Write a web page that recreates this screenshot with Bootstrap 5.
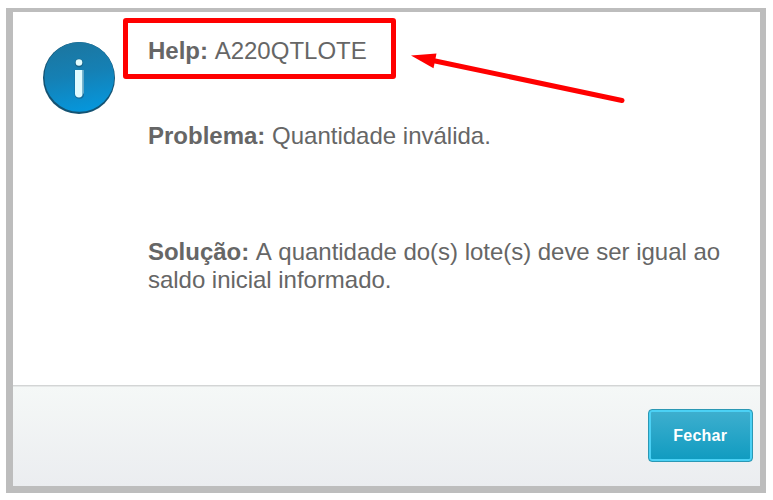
<!DOCTYPE html>
<html lang="pt-BR">
<head>
<meta charset="utf-8">
<meta name="viewport" content="width=device-width, initial-scale=1">
<title>Help: A220QTLOTE</title>
<link href="https://cdn.jsdelivr.net/npm/bootstrap@5.3.0/dist/css/bootstrap.min.css" rel="stylesheet">
<style>
  body { font-family: "Liberation Sans", Arial, sans-serif; height: 500px; padding: 8px 7px 7px 6px; }
  .dialog-frame { border: solid #bdbdbd; border-width: 4px 6px 7px 7px; border-radius: 0; }
  .dialog-body { padding: 25px 30px 0; }
  .info-icon { width: 72px; height: 72px; margin-top: 5px; }
  .help-text { color: #666; font-size: 24px; line-height: 28px; font-kerning: none; margin-left: 33px; width: 590px; }
  .help-code { margin-bottom: 57px; }
  .help-problem { margin-bottom: 88px; }
  .help-solution { letter-spacing: -.03px; }
  .dialog-footer { height: 101px; padding: 0 7.5px 2px; border-top: 1px solid #d3d5d5; box-shadow: inset 0 1px #e6e8e8; background: linear-gradient(#f5f8f7, #ebedf0); }
  .btn-fechar, .btn-fechar:hover { width: 104.5px; height: 53px; padding: 2px 0 0; color: #fff; font-size: 16px; letter-spacing: .25px; border: 1px solid #2b98b4; border-radius: 4px; box-shadow: inset 0 0 0 2px #4bd1f5; background: linear-gradient(#3fafcf, #0f9bc0); }
  .mark-box { left: 123px; top: 18px; width: 273px; height: 61px; border: 5px solid #f00; border-radius: 3px; }
  .mark-arrow { left: 400px; top: 45px; }
</style>
</head>
<body class="bg-white position-relative overflow-hidden">
  <div class="dialog-frame d-flex flex-column h-100 bg-white" role="dialog">
    <div class="dialog-body d-flex align-items-start flex-grow-1">
      <svg class="info-icon flex-shrink-0" viewBox="0 0 72 72" role="img" aria-label="Informação">
        <defs>
          <linearGradient id="disc" x1=".4" y1="0" x2=".6" y2="1">
            <stop offset="0" stop-color="#1c76a0"/><stop offset=".45" stop-color="#1580b4"/><stop offset="1" stop-color="#0597dd"/>
          </linearGradient>
        </defs>
        <circle cx="36" cy="36" r="36" fill="#145373"/>
        <circle cx="36.3" cy="34.9" r="34.9" fill="url(#disc)"/>
        <circle cx="36" cy="21" r="4.2" fill="#176287"/>
        <circle cx="36" cy="20.5" r="3.3" fill="#e2fdff"/>
        <path d="M31.5 28h9.5v24.5q0 4-4.5 4.3-4.7-.2-5-4.3z" fill="#146c9b"/>
        <path d="M32 28h7.5v24q0 3.2-3.5 3.5-3.7-.3-4-3.5z" fill="#e0fbff"/>
        <path d="M39.5 28h1.3v23l-1.3 2z" fill="#79b9d4"/>
      </svg>
      <div class="help-text">
        <p class="help-code"><strong>Help:</strong> A220QTLOTE</p>
        <p class="help-problem"><strong>Problema:</strong> Quantidade inválida.</p>
        <p class="help-solution mb-0"><strong>Solução:</strong> A quantidade do(s) lote(s) deve ser igual ao saldo inicial informado.</p>
      </div>
    </div>
    <div class="dialog-footer d-flex justify-content-end align-items-center">
      <button type="button" class="btn btn-fechar fw-bold">Fechar</button>
    </div>
  </div>
  <div class="mark-box position-absolute"></div>
  <svg class="mark-arrow position-absolute" width="240" height="65" viewBox="0 0 240 65" aria-hidden="true">
    <path d="M34 15.7 222 55.5" fill="none" stroke="#f00" stroke-width="5" stroke-linecap="round"/>
    <path d="M11 10.5 36.5 8.5 33.5 23.3z" fill="#f00"/>
  </svg>
<script src="https://cdn.jsdelivr.net/npm/bootstrap@5.3.0/dist/js/bootstrap.bundle.min.js"></script>
</body>
</html>
